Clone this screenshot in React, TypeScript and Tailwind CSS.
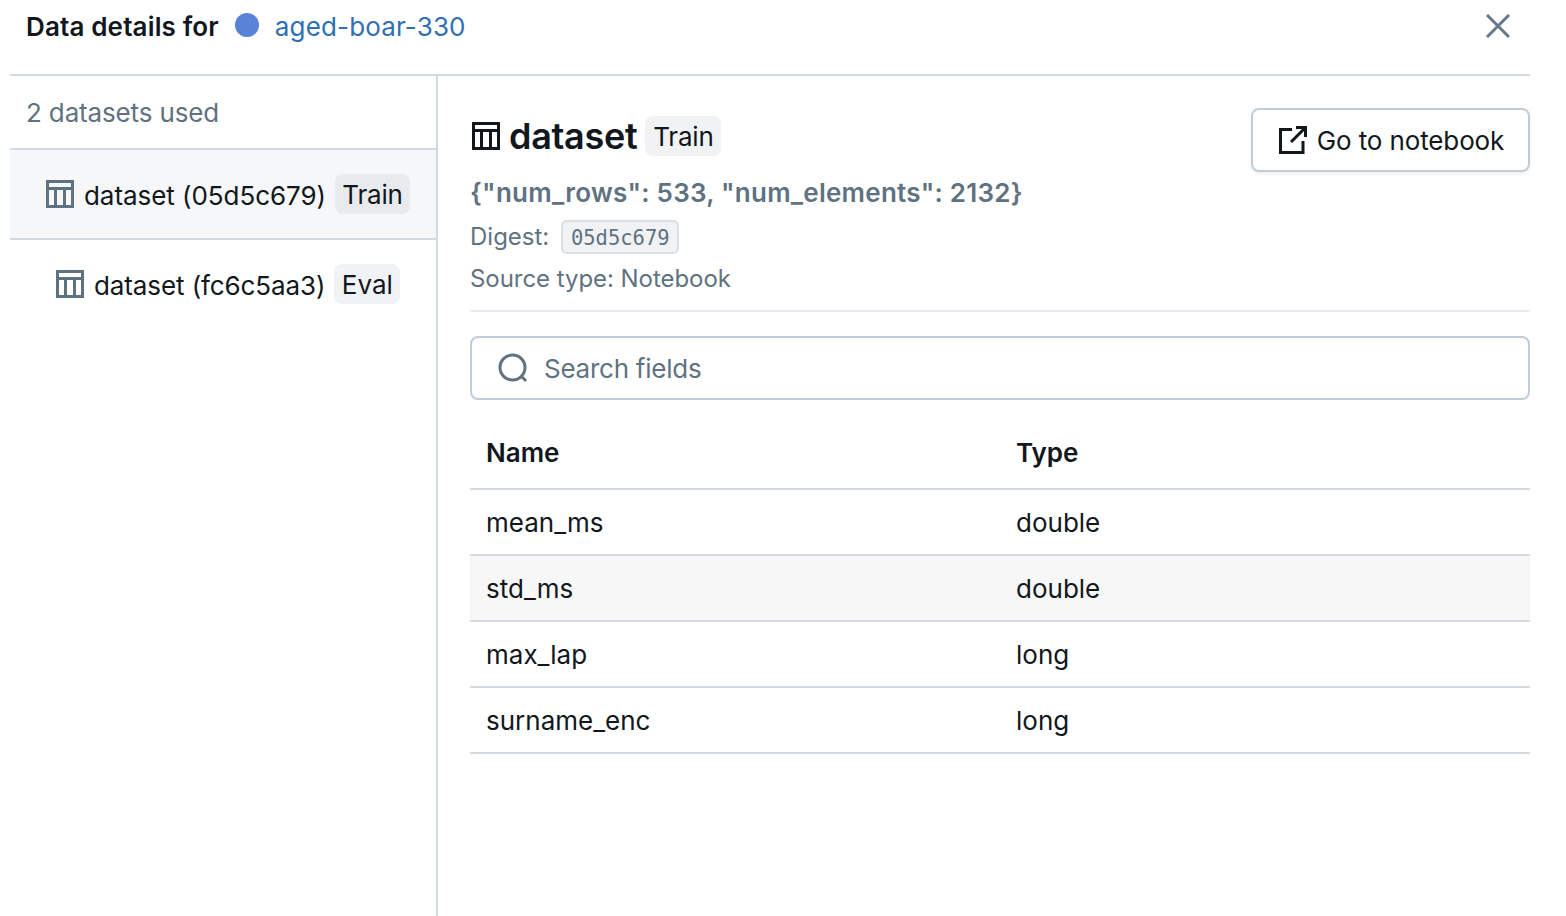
import React from "react";

function TableIcon({ className }: { className: string }) {
  return (
    <svg viewBox="0 0 28 28" fill="none" className={className}>
      <path fillRule="evenodd" clipRule="evenodd" fill="currentColor" d="M0.5 0H27.5A0.5 0.5 0 0 1 28 0.5V27.5A0.5 0.5 0 0 1 27.5 28H0.5A0.5 0.5 0 0 1 0 27.5V0.5A0.5 0.5 0 0 1 0.5 0ZM3 3V7H25V3H3ZM3 10V25H8V10H3ZM11 10V25H17V10H11ZM20 10V25H25V10H20Z" />
    </svg>
  );
}

const rows = [
  ["mean_ms", "double", false],
  ["std_ms", "double", true],
  ["max_lap", "long", false],
  ["surname_enc", "long", false],
] as const;

export default function App() {
  return (
    <div className="w-[1566px] h-[916px] overflow-hidden bg-white pl-[10px] pr-[36px] flex flex-col text-[26px] text-[#11171c] font-['Inter',sans-serif]">
      <header className="h-[76px] shrink-0 border-b-2 border-[#d1d9e1] flex items-start pl-[16px] pr-[20px]">
        <span className="mt-[8px] leading-[38px] font-semibold tracking-[0.15px]">Data details for</span>
        <span className="ml-[16px] mt-[13px] w-[24px] h-[24px] rounded-full bg-[#5a82d6]" />
        <span className="ml-[16px] mt-[8px] leading-[38px] text-[#2f6fb5] tracking-[0.15px]">aged-boar-330</span>
        <svg viewBox="0 0 24 24" className="ml-auto mt-[14px] w-[24px] h-[24px] text-[#67788a]" fill="none" stroke="currentColor" strokeWidth="3">
          <path d="M1 1L23 23M23 1L1 23" />
        </svg>
      </header>
      <div className="flex flex-1 min-h-0">
        <aside className="w-[428px] shrink-0 border-r-2 border-[#d1d9e1] flex flex-col">
          <div className="h-[74px] shrink-0 border-b-2 border-[#d1d9e1] pl-[16px] pt-[18px] leading-[38px] text-[#5f7281] tracking-[-0.15px]">2 datasets used</div>
          <div className="h-[90px] shrink-0 border-b-2 border-[#d1d9e1] bg-[#f5f7f9] flex items-center pl-[36px] gap-[9px]">
            <TableIcon className="w-[28px] h-[28px] text-[#5f7281] mr-[1px]" />
            <span className="tracking-[-0.05px] mt-[2px]">dataset (05d5c679)</span>
            <span className="h-[40px] w-[75px] text-center rounded-[8px] bg-[#e8eaed] leading-[42px] tracking-[-0.2px]">Train</span>
          </div>
          <div className="h-[88px] shrink-0 flex items-center pl-[46px] gap-[9px]">
            <TableIcon className="w-[28px] h-[28px] text-[#5f7281] mr-[1px]" />
            <span className="tracking-[-0.1px] mt-[2px]">dataset (fc6c5aa3)</span>
            <span className="h-[40px] w-[66px] text-center rounded-[8px] bg-[#f1f2f4] leading-[42px]">Eval</span>
          </div>
        </aside>
        <main className="flex-1 min-w-0 pl-[32px]">
          <div className="flex items-start justify-between h-[236px] border-b-2 border-[#e8ecf0]">
            <div>
              <div className="flex items-center mt-[40px] h-[40px]">
                <TableIcon className="w-[28px] h-[28px] text-[#11171c] ml-[2px] mr-[9px]" />
                <span className="text-[36px] leading-[40px] font-semibold tracking-[-0.3px]">dataset</span>
                <span className="ml-[8px] h-[40px] w-[76px] text-center rounded-[8px] bg-[#f1f2f4] leading-[42px] tracking-[-0.2px]">Train</span>
              </div>
              <div className="mt-[20px] leading-[34px] font-semibold text-[#5f7281] tracking-[0.25px]">{'{"num_rows": 533, "num_elements": 2132}'}</div>
              <div className="mt-[9px] flex items-center h-[36px] text-[24px] text-[#5f7281]">
                <span>Digest:</span>
                <span className="ml-[12px] h-[34px] w-[118px] text-center rounded-[6px] border-2 border-[#dcdfe2] bg-[#f1f2f4] font-['DejaVu_Sans_Mono',monospace] text-[20.5px] leading-[32px]">05d5c679</span>
              </div>
              <div className="mt-[6px] leading-[36px] text-[24px] text-[#5f7281] tracking-[-0.05px]">Source type: Notebook</div>
            </div>
            <button className="mt-[32px] w-[279px] h-[64px] rounded-[8px] border-2 border-[#c0cdd8] bg-white shadow-[0_2px_3px_rgba(0,0,0,0.06)] flex items-center justify-center gap-[10px] tracking-[-0.12px] pl-[2px]">
              <svg viewBox="0 0 28 28" className="w-[28px] h-[28px]" fill="none" stroke="currentColor" strokeWidth="3">
                <path d="M13 3.5H1.5V26.5H24V15" />
                <path d="M12 16L26 2M17 1.5H26.5V11" />
              </svg>
              <span>Go to notebook</span>
            </button>
          </div>
          <div className="mt-[24px] h-[64px] rounded-[8px] border-2 border-[#c0cdd8] flex items-center pl-[25px] gap-[15px] text-[#5f7281] tracking-[-0.25px]">
            <svg viewBox="0 0 32 32" className="w-[32px] h-[32px]" fill="none" stroke="currentColor" strokeWidth="3">
              <circle cx="15.5" cy="15.5" r="12.5" />
              <path d="M24.5 24.5L29 29" />
            </svg>
            <span>Search fields</span>
          </div>
          <div className="mt-[22px] grid grid-cols-[530px_1fr] h-[68px] border-b-2 border-[#d5dae3] items-center pl-[16px] pb-[6px] font-semibold">
            <span>Name</span>
            <span>Type</span>
          </div>
          {rows.map(([name, type, alt]) => (
            <div key={name} className={`grid grid-cols-[530px_1fr] h-[66px] border-b-2 border-[#d5dae3] items-center pl-[16px] ${alt ? "bg-[#f7f7f7]" : ""}`}>
              <span>{name}</span>
              <span>{type}</span>
            </div>
          ))}
        </main>
      </div>
    </div>
  );
}
